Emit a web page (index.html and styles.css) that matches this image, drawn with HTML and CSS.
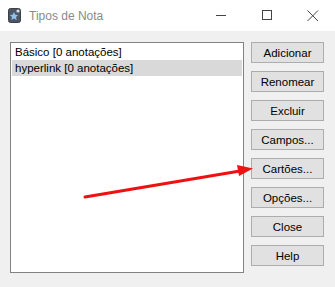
FILE: index.html
```html
<!DOCTYPE html>
<html lang="pt">

<head>
    <meta charset="utf-8">
    <meta name="viewport" content="width=device-width, initial-scale=1.0">
    <title>Tipos de Nota</title>
    <link rel="stylesheet" href="styles.css">
</head>

<body>
    <div class="janela">
        <header class="titulo">
            <svg class="ikon" width="13" height="15" viewBox="0 0 13 15">
                <rect x="0.5" y="0.5" width="12" height="14" rx="2" fill="#4d5663" stroke="#3a414b" />
                <path d="M6 4 L7.3 6.8 L10.2 7.1 L8 9 L8.7 11.9 L6 10.4 L3.3 11.9 L4 9 L1.8 7.1 L4.7 6.8 Z" fill="#8fc4f0" />
                <circle cx="10" cy="3" r="1.6" fill="#d8dde4" />
            </svg>
            <span class="navn">Tipos de Nota</span>
            <div class="kontrol">
                <div class="kbtn">
                    <svg width="11" height="11" viewBox="0 0 11 11"><path d="M0 5.5 H10" stroke="#444" stroke-width="1" /></svg>
                </div>
                <div class="kbtn">
                    <svg width="11" height="11" viewBox="0 0 11 11"><rect x="0.5" y="0.5" width="9" height="9" fill="none" stroke="#444" /></svg>
                </div>
                <div class="kbtn">
                    <svg width="12" height="12" viewBox="0 0 12 12"><path d="M0.5 0.5 L11 11 M11 0.5 L0.5 11" stroke="#444" stroke-width="1" /></svg>
                </div>
            </div>
        </header>

        <main class="indhold">
            <div class="liste">
                <div class="raekke">Básico [0 anotações]</div>
                <div class="raekke valgt">hyperlink [0 anotações]</div>
            </div>

            <nav class="knapper">
                <button>Adicionar</button>
                <button>Renomear</button>
                <button>Excluir</button>
                <button>Campos...</button>
                <button>Cartões...</button>
                <button>Opções...</button>
                <button>Close</button>
                <button>Help</button>
            </nav>
        </main>

        <svg class="pil" width="335" height="287" viewBox="0 0 335 287">
            <path d="M85 197 L240 171" stroke="#ee1111" stroke-width="3" stroke-linecap="round" />
            <path d="M253 168.5 L237 165 L239 176 Z" fill="#ee1111" />
        </svg>
    </div>
</body>

</html>
```

FILE: styles.css
```css
body {
    margin: 0;
    padding: 0;
    background: #f0f0f0;
    font-family: "Liberation Sans", Arial, sans-serif;
    font-size: 12px;
    color: #000000;
}

.janela {
    position: relative;
    width: 335px;
    height: 287px;
    overflow: hidden;
}

.titulo {
    display: flex;
    align-items: center;
    height: 31px;
    background: #ffffff;
}

.ikon {
    margin-left: 8px;
    margin-top: -1px;
}

.navn {
    margin-left: 8px;
    font-size: 12px;
    color: #8a8a8a;
}

.kontrol {
    display: flex;
    margin-left: auto;
    margin-right: -1px;
}

.kbtn {
    width: 46px;
    height: 31px;
    display: flex;
    align-items: center;
    justify-content: center;
}

.indhold {
    display: flex;
    padding: 11px 0 0 10px;
    gap: 7px;
}

.liste {
    width: 232px;
    height: 228px;
    border: 1px solid #828282;
    background: #ffffff;
    padding-top: 1px;
    box-sizing: content-box;
    font-size: 11.5px;
}

.raekke {
    height: 16px;
    line-height: 16px;
    padding-left: 3px;
    margin: 0 1px;
    white-space: nowrap;
}

.valgt {
    background: #d9d9d9;
}

.knapper {
    display: flex;
    flex-direction: column;
    gap: 8px;
}

.knapper button {
    width: 73px;
    height: 21px;
    margin: 0;
    padding: 0;
    border: 1px solid #adadad;
    background: #e1e1e1;
    font-family: "Liberation Sans", Arial, sans-serif;
    font-size: 11.5px;
    color: #000000;
}

.pil {
    position: absolute;
    left: 0;
    top: 0;
    pointer-events: none;
}
```
